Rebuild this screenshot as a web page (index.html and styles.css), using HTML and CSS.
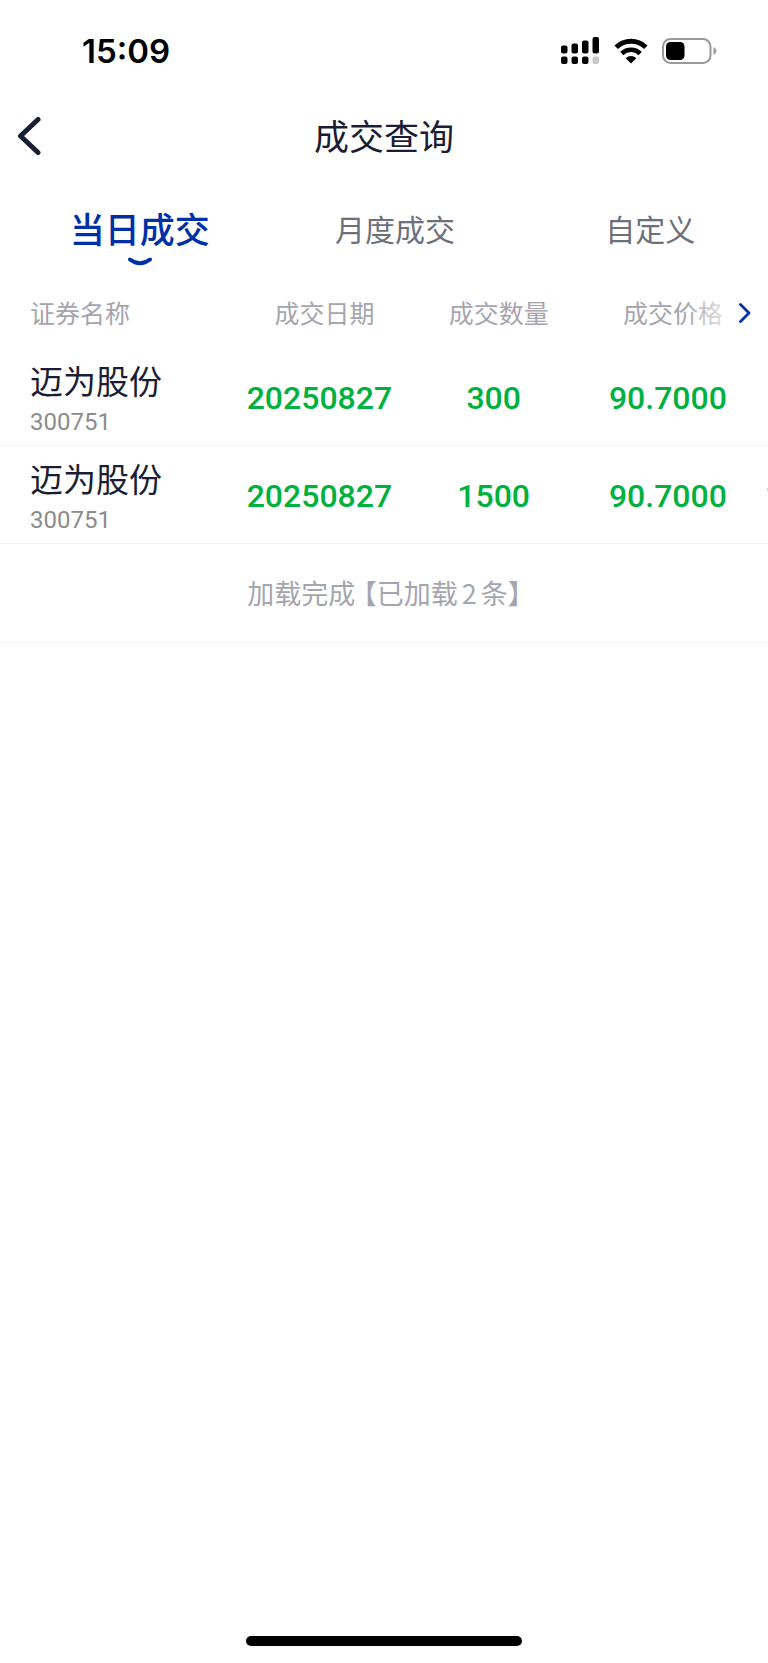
FILE: index.html
```
<!DOCTYPE html>
<html lang="zh-CN">
<head>
<meta charset="UTF-8">
<meta name="viewport" content="width=device-width, initial-scale=1.0">
<link rel="stylesheet" href="styles.css">
<title>成交查询</title>
</head>
<body>
  <div class="status-bar">
    <span class="time">15:09</span>
    <div class="status-icons">
      <svg width="40" height="30" viewBox="0 0 40 30" aria-hidden="true">
        <rect x="1" y="9.500" width="6.500" height="8" rx="2"/>
        <rect x="11.500" y="7.500" width="6.500" height="10" rx="2"/>
        <rect x="22" y="4.500" width="6.500" height="13" rx="2"/>
        <rect x="32.500" y="1" width="6.500" height="16.500" rx="2"/>
        <rect x="1" y="20.500" width="6.500" height="7.500" rx="2"/>
        <rect x="11.500" y="20.500" width="6.500" height="7.500" rx="2"/>
        <rect x="22" y="20.500" width="6.500" height="7.500" rx="2"/>
        <rect x="32.500" y="20.500" width="6.500" height="7.500" rx="2" fill="#c8c8c8"/>
      </svg>
      <svg width="34" height="26" viewBox="0 0 34 26" aria-hidden="true">
        <path d="M2.200 9.200 A21.500 21.500 0 0 1 31.800 9.200" fill="none" stroke="#000" stroke-width="5"/>
        <path d="M7.800 15.500 A13.300 13.300 0 0 1 26.200 15.500" fill="none" stroke="#000" stroke-width="4.600"/>
        <path d="M17 25.500 L11.700 20.200 A7.500 7.500 0 0 1 22.300 20.200 Z"/>
      </svg>
      <svg width="55" height="26" viewBox="0 0 55 26" aria-hidden="true">
        <rect x="1" y="1" width="47.500" height="24" rx="7.500" fill="none" stroke="#999" stroke-width="2"/>
        <rect x="4" y="4" width="18.500" height="18" rx="4.500"/>
        <path d="M51.500 9 Q54.500 10.500 54.500 13 Q54.500 15.500 51.500 17 Z" fill="#999"/>
      </svg>
    </div>
  </div>

  <header class="nav">
    <button class="back" type="button" aria-label="返回">
      <svg width="24" height="38" viewBox="0 0 24 38">
        <path d="M21 2.500 L3.500 19 L21 35.500" fill="none" stroke="#1b1e33" stroke-width="5" stroke-linecap="round" stroke-linejoin="round"/>
      </svg>
    </button>
    <h1>成交查询</h1>
  </header>

  <nav class="tabs">
    <a class="tab active" href="#today">当日成交
      <svg class="smile" width="26" height="10" viewBox="0 0 26 10" aria-hidden="true">
        <path d="M3 2.500 Q13 10 23 2.500" fill="none" stroke="#0030a8" stroke-width="4" stroke-linecap="round"/>
      </svg>
    </a>
    <a class="tab" href="#month">月度成交</a>
    <a class="tab" href="#custom">自定义</a>
  </nav>

  <main class="list">
    <table class="deals">
      <thead>
        <tr>
          <th class="name-col">证券名称</th>
          <th>成交日期</th>
          <th>成交数量</th>
          <th>成交价格</th>
          <th>成交金额</th>
        </tr>
      </thead>
      <tbody>
        <tr>
          <td class="name-col"><div class="name">迈为股份</div><div class="code">300751</div></td>
          <td>20250827</td>
          <td>300</td>
          <td>90.7000</td>
          <td>27210.00</td>
        </tr>
        <tr>
          <td class="name-col"><div class="name">迈为股份</div><div class="code">300751</div></td>
          <td>20250827</td>
          <td>1500</td>
          <td>90.7000</td>
          <td>136050.00</td>
        </tr>
      </tbody>
    </table>
    <button class="more" type="button" aria-label="更多">
      <svg width="12" height="20" viewBox="0 0 12 20">
        <path d="M1.500 1.500 L10 10 L1.500 18.500" fill="none" stroke="#0030a8" stroke-width="2.800" stroke-linecap="round" stroke-linejoin="round"/>
      </svg>
    </button>
  </main>
  <p class="loaded">加载完成<span class="bracket">【</span>已加载<span class="count">2</span>条】</p>

  <div class="home-bar"></div>
</body>
</html>
```
FILE: styles.css
```
* {
  box-sizing: border-box;
}
body {
  margin: 0;
  min-height: 100vh;
  display: flex;
  flex-direction: column;
  background-color: #fff;
  color: #1b1e33;
  font-family: "Noto Sans CJK SC", sans-serif;
  overflow-x: hidden;
}
button {
  border: 0;
  background: none;
  cursor: pointer;
}
.status-bar {
  display: flex;
  align-items: center;
  justify-content: space-between;
  height: 102px;
  padding: 0 51px 0 82px;
}
.time {
  color: #000;
  font-family: Inter, sans-serif;
  font-size: 33px;
  font-weight: 600;
}
.status-icons {
  display: flex;
  align-items: center;
  gap: 14px;
}
.nav {
  display: grid;
  grid-template-columns: 60px 1fr 60px;
  align-items: center;
  height: 68px;
}
.back {
  display: flex;
  padding: 0 0 0 17px;
}
h1 {
  margin: 0;
  padding-bottom: 2px;
  font-size: 35px;
  font-weight: 400;
  line-height: 52px;
  text-align: center;
}
.tabs {
  display: grid;
  grid-template-columns: 6fr 7fr 6fr;
  height: 110px;
  padding: 33px 0 0 22px;
}
.tab {
  color: #6d6f7d;
  font-size: 30px;
  line-height: 50px;
  text-align: center;
  text-decoration: none;
}
.tab.active {
  color: #0030a8;
  font-size: 35px;
  font-weight: 500;
}
.smile {
  display: block;
  margin: 4px auto 0;
}
.list {
  position: relative;
  overflow: hidden;
}
.deals {
  width: 121%;
  table-layout: fixed;
  border-collapse: collapse;
}
th {
  height: 67px;
  padding: 0 0 4px 10px;
  color: #a5a5ae;
  font-size: 25px;
  font-weight: 400;
}
td {
  height: 98px;
  padding: 4px 0 0;
  border-bottom: 1px solid #f4f4f6;
  color: #00b140;
  font-family: Roboto, sans-serif;
  font-size: 32px;
  font-weight: 500;
  text-align: center;
}
.name-col {
  width: 25%;
  padding-left: 30px;
  text-align: left;
}
.name {
  padding-top: 2px;
  color: #1b1e33;
  font-family: "Noto Sans CJK SC", sans-serif;
  font-size: 33px;
  font-weight: 400;
  line-height: 46px;
}
.code {
  color: #8c8c8c;
  font-size: 24px;
  font-weight: 400;
  line-height: 38px;
}
.more {
  position: absolute;
  top: 0;
  right: 0;
  display: flex;
  align-items: center;
  justify-content: flex-end;
  width: 84px;
  height: 66px;
  padding: 0 17px 0 0;
  background: linear-gradient(to right, rgba(255, 255, 255, 0), #fff 70%);
}
.loaded {
  height: 99px;
  margin: 0;
  padding-left: 14px;
  border-bottom: 1px solid #f4f4f6;
  color: #a5a5ae;
  font-size: 27px;
  line-height: 98px;
  text-align: center;
}
/* half-width opening bracket */
.bracket {
  margin-left: 8px;
  font-feature-settings: "halt";
}
.count {
  margin: 0 4px;
}
.home-bar {
  width: 36%;
  height: 10px;
  margin: auto auto 17px;
  border-radius: 5px;
  background-color: #000;
}
```
